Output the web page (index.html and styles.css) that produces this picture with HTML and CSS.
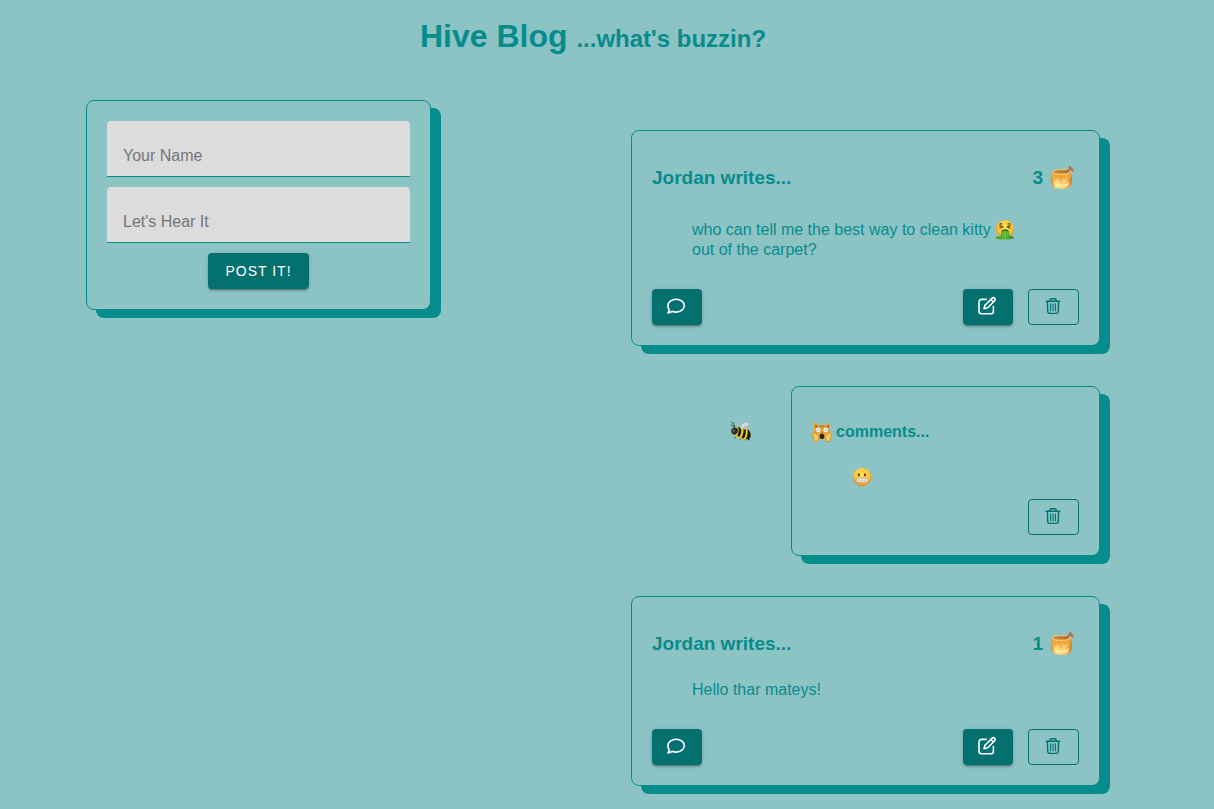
FILE: index.html
```html
<!DOCTYPE html>
<html lang="en">
<head>
<meta charset="utf-8">
<meta name="viewport" content="width=device-width, initial-scale=1">
<title>Hive Blog</title>
<link rel="stylesheet" href="styles.css">
</head>
<body>
<svg class="sprite" aria-hidden="true">
  <defs>
    <radialGradient id="face" cx=".5" cy=".4" r=".6"><stop offset="0" stop-color="#ffe45c"/><stop offset=".65" stop-color="#fbc63a"/><stop offset="1" stop-color="#e08a1c"/></radialGradient>
    <linearGradient id="honey-fill" x1="0" x2="1"><stop offset="0" stop-color="#d58a2a"/><stop offset=".25" stop-color="#ffd985"/><stop offset=".7" stop-color="#fbcb66"/><stop offset="1" stop-color="#c9781f"/></linearGradient>
    <linearGradient id="vomit" x1="0" x2="1"><stop offset="0" stop-color="#3f9a22"/><stop offset=".5" stop-color="#62b832"/><stop offset="1" stop-color="#2f861f"/></linearGradient>
  </defs>
  <symbol id="chat" viewBox="0 0 20 20"><path d="M10.200 3.200c4.600 0 8.100 2.800 8.100 6.400s-3.500 6.500-8.100 6.500c-1.600 0-3-.3-4.200-.9-.8.9-2.100 1.700-4.100 1.700.9-.8 1.300-1.900 1.200-3.100-.8-1.100-1.200-2.700-1.200-4.200 0-3.600 3.700-6.400 8.300-6.400z"/></symbol>
  <symbol id="edit" viewBox="0 0 20 20"><path d="M9.200 3.400H4.600a2.600 2.600 0 0 0-2.600 2.600v9.200a2.600 2.600 0 0 0 2.600 2.600h9.200a2.600 2.600 0 0 0 2.600-2.600v-4.600M7 12.800l1-3.600 7-7a1.750 1.750 0 0 1 2.600 2.500l-7 7zM13.800 3.400l2.600 2.600"/></symbol>
  <symbol id="trash" viewBox="0 0 20 20"><path d="M2.500 4.800h15M6.500 4.600V3.500a1.600 1.600 0 0 1 1.600-1.600h3.800a1.600 1.600 0 0 1 1.600 1.600v1.100M3.800 5l.3 11.200a2.100 2.100 0 0 0 2.100 2h7.600a2.100 2.100 0 0 0 2.100-2L16.200 5"/><path class="thin" d="M7.300 7.500v7.700M10 7.500v7.700M12.700 7.500v7.700"/></symbol>
  <symbol id="honey" viewBox="0 0 24 24">
    <path d="M3.200 6.500C.2 9.500 0 17 3 20.800c1.500 2.800 15.400 2.800 17 0 3-3.800 2.800-11.300-.2-14.300z" fill="url(#honey-fill)"/>
    <path d="M2.400 8.500c-.6 1-.9 2.600-.9 3.600 1.300.8 1.600-1.300 2.500-.8 1.100.7.300 3.300 1.400 3.300s.5-2.300 1.500-2.300.4 2.300 1.500 2.300.4-1.800 1.400-1.800.2 4 1.400 4 .3-5 1.500-5 .3 2.300 1.500 2.300.3-2.300 1.500-2.300.4 1.500 1.400 1.300c.8-.2.2-2 1.200-2.300 1.100-.3 1.800 1.500 2.700.8 0-1.300-.4-2.600-.9-3.300z" fill="#f0a63a"/>
    <path d="M4 14.500c.2 2.500.8 4.500 2 5.500 3 1 8 1 11 0 1.200-1 1.800-2.500 2-4.500-1.500 2.500-4 3.200-7.500 3.200s-6-1.200-7.500-4.200z" fill="#fff3b4" opacity=".8"/>
    <ellipse cx="11.500" cy="6" rx="9.700" ry="3" fill="#f3c46e"/><ellipse cx="11.500" cy="6" rx="8.300" ry="1.900" fill="#bf7f35"/>
    <path d="M4 6.400c3 1.700 12 1.700 15 0" stroke="#f0b04a" stroke-width=".8" fill="none"/>
    <path d="m15 6.300 6-3.800" stroke="#a86845" stroke-width="1.800" stroke-linecap="round"/><path d="m20 1.200 2.600 3.200" stroke="#b57452" stroke-width="2.400" stroke-linecap="round"/>
  </symbol>
  <symbol id="sick" viewBox="0 0 20 20">
    <circle cx="10" cy="9" r="9" fill="url(#face)"/>
    <path d="m4.200 5 3.500 1.900-3.300 1.400M15.800 5l-3.500 1.900 3.300 1.400M4.800 3.700l2.600.5m7.800-.5-2.600.5" fill="none" stroke="#764515" stroke-width="1.200"/>
    <path d="M6 12c.2-3.400 8-3.400 8 0v3c1.800.4 2.200 1.500 4.300 1.700 1.600.3.700 1.900-.8 2-2.500.7-4.500.7-7.500.7s-6 .2-8.200-.7c-2-.7-1.500-1.800.2-2 1.800-.3 3.800-.6 4-2z" fill="url(#vomit)"/>
    <path d="M6.200 11.500c.6-2.900 7-2.900 7.600 0-1.800-1-5.800-1-7.600 0z" fill="#42641c"/>
    <path d="M8 12.500v4m2.500-3.500v4.500m2-5v3" stroke="#86cc48" stroke-width=".6"/>
  </symbol>
  <symbol id="bee" viewBox="0 0 24 22">
    <path d="M5 6.500C4.700 3 3.500 1.600 1.500 1.600M4 7C3 4.700 2 4.200.6 4.500M9 15l-4 4m7-3-1 4.500m5-3 .5 3.500" fill="none" stroke="#3a3828" stroke-width="1"/>
    <path d="M5 8c3-2 9-2.100 13 .1 4 2.200 5 6.400 4 9.800l-1.800 2.400c-3.800 0-11-.5-15.200-5z" fill="#f6d51d"/>
    <path d="M8.500 7c1.700 1 1.200 6.500-.8 9l2.600 1.500c2.300-3.200 2.700-8.300 1.200-11zM14.300 6.800c1.200 3.500.2 8-1.900 11.700l2.800.7c2.200-3.500 2.700-7.800 1.700-11.400zM19 8.800c.7 4 0 7.700-1.800 11l2.700.4 1.200 1.300.4-2.500 1-1.600c.8-3.200-.5-6.400-3.500-8.600z" fill="#1e1d15"/>
    <path d="M2 8.500C4 6.500 8 7 8.600 9c.6 3-1 5.500-3.200 6C2 15.200.2 11 2 8.500z" fill="#302e22"/><circle cx="3.800" cy="10.600" r="1.200" fill="#77705a"/>
    <path d="M10.500 8C12 4.500 15.500 1 19 1.700c2.400.7 1 4.800-2 7z" fill="#d8ddd8" opacity=".9"/><path d="M13.500 8.500c2-2.800 5-4.600 7.300-3.800 1.700 1-.8 4-3.600 5.300z" fill="#b4bbb7" opacity=".9"/>
  </symbol>
  <symbol id="cat" viewBox="0 0 20 20">
    <path d="M1.800.7 7 3h6L18.200.7l-.1 8.300c.3 5-2.600 8.500-8.100 8.500S1.600 14 1.900 9z" fill="#eda82c"/><path d="m3 2.700 3 1.400-2.500 2zM17 2.700l-3 1.400 2.500 2z" fill="#a95d21"/>
    <path d="M10 3v3M8 3.200l.5 2M12 3.200l-.5 2" stroke="#a96820" stroke-width=".8"/>
    <ellipse cx="6.300" cy="8" rx="2.800" ry="2.700" fill="#f7f5ec" stroke="#ae6c28" stroke-width=".5"/><ellipse cx="13.700" cy="8" rx="2.800" ry="2.700" fill="#f7f5ec" stroke="#ae6c28" stroke-width=".5"/><circle cx="6.300" cy="8" r=".6" fill="#554433"/><circle cx="13.700" cy="8" r=".6" fill="#554433"/>
    <ellipse cx="10" cy="14.200" rx="2.300" ry="2.800" fill="#32221a"/><path d="M9 10.200h2l-1 1z" fill="#b44b39"/>
    <path d="M.5 11.500c.7-1.300 2-.5 2.500.5.600-1.200 1.700-.6 2 .5 1.700 0 2 1.500 1.500 3.500L6 19.500H2L1.500 16C.3 14.500 0 13 .5 11.500zm19 0c-.7-1.300-2-.5-2.500.5-.6-1.200-1.700-.6-2 .5-1.700 0-2 1.500-1.500 3.500l.5 3.500h4l.5-3.500c1.200-1.500 1.500-3 1-4.500z" fill="#f5c95a" stroke="#bd8127" stroke-width=".6"/>
  </symbol>
  <symbol id="grimace" viewBox="0 0 20 20">
    <circle cx="10" cy="10" r="9.200" fill="url(#face)"/><ellipse cx="7" cy="7.800" rx="1.100" ry="1.500" fill="#643810"/><ellipse cx="13" cy="7.800" rx="1.100" ry="1.500" fill="#643810"/>
    <rect x="4" y="11" width="12" height="4.600" rx="2.300" fill="#f4f1ea" stroke="#a58c69" stroke-width=".6"/><path d="M4.300 13.300h11.400M7 11v4.500m3-4.500v4.500m3-4.500v4.500" stroke="#b7b1a6" stroke-width=".5"/>
  </symbol>
</svg>

<header class="masthead">
  <h1 class="title">Hive Blog <small class="tagline">...what's buzzin?</small></h1>
</header>

<main class="layout">
  <form class="card composer">
    <input class="field" type="text" aria-label="Your Name" placeholder="Your Name">
    <input class="field" type="text" aria-label="Let's Hear It" placeholder="Let's Hear It">
    <button class="button submit" type="button">POST IT!</button>
  </form>

  <section class="feed" aria-label="Posts">
    <article class="card">
      <header class="card-head">
        <h2 class="author">Jordan writes...</h2>
        <span class="score">3 <svg class="jar" role="img" aria-label="honey"><use href="#honey"/></svg></span>
      </header>
      <p class="message">who can tell me the best way to clean kitty <svg class="emoji tall" role="img" aria-label="vomit"><use href="#sick"/></svg> out of the carpet?</p>
      <div class="actions">
        <button class="button tool first" type="button" aria-label="Comment"><svg class="icon"><use href="#chat"/></svg></button>
        <button class="button tool" type="button" aria-label="Edit"><svg class="icon"><use href="#edit"/></svg></button>
        <button class="button tool outlined" type="button" aria-label="Delete"><svg class="icon bin"><use href="#trash"/></svg></button>
      </div>
    </article>

    <div class="reply">
      <svg class="bee" role="img" aria-label="bee"><use href="#bee"/></svg>
      <article class="card comment">
        <h3 class="commenter"><svg class="emoji" role="img" aria-label="weary cat"><use href="#cat"/></svg> comments...</h3>
        <p class="message reaction"><svg class="emoji" role="img" aria-label="grimace"><use href="#grimace"/></svg></p>
        <div class="actions">
          <button class="button tool outlined" type="button" aria-label="Delete comment"><svg class="icon bin"><use href="#trash"/></svg></button>
        </div>
      </article>
    </div>

    <article class="card">
      <header class="card-head">
        <h2 class="author">Jordan writes...</h2>
        <span class="score">1 <svg class="jar" role="img" aria-label="honey"><use href="#honey"/></svg></span>
      </header>
      <p class="message">Hello thar mateys!</p>
      <div class="actions">
        <button class="button tool first" type="button" aria-label="Comment"><svg class="icon"><use href="#chat"/></svg></button>
        <button class="button tool" type="button" aria-label="Edit"><svg class="icon"><use href="#edit"/></svg></button>
        <button class="button tool outlined" type="button" aria-label="Delete"><svg class="icon bin"><use href="#trash"/></svg></button>
      </div>
    </article>
  </section>
</main>
</body>
</html>
```
FILE: styles.css
```css
:root {
  --page: #8cc3c5;
  --teal: #078c8c;
  --deep: #057070;
}

* {
  box-sizing: border-box;
}

body {
  margin: 0;
  background: var(--page);
  color: var(--teal);
  font: 16px/20px "Liberation Sans", Arial, sans-serif;
}

.sprite {
  position: absolute;
  width: 0;
  height: 0;
}

.masthead {
  padding: 16px 28px 44px 0;
  text-align: center;
}

.title {
  margin: 0;
  font-size: 32px;
  line-height: 40px;
}

.tagline {
  font-size: 24px;
  line-height: 24px;
}

.layout {
  display: flex;
  justify-content: space-between;
  align-items: flex-start;
  gap: 40px;
  padding: 0 114px 16px 86px;
}

.card {
  padding: 20px;
  border: 1px solid var(--teal);
  border-radius: 8px;
  background: var(--page);
  box-shadow: 10px 8px 0 var(--teal);
}

.composer {
  display: flex;
  flex-direction: column;
  flex: 0 1 345px;
  gap: 10px;
}

.field {
  width: 100%;
  height: 56px;
  padding: 20px 16px 6px;
  border: 0;
  border-bottom: 1px solid var(--teal);
  border-radius: 4px 4px 0 0;
  background: #dcdcdc;
  color: #333;
  font: inherit;
}

.field::placeholder {
  color: #757575;
  opacity: 1;
}

.button {
  display: flex;
  justify-content: center;
  align-items: center;
  width: 50px;
  height: 36px;
  padding: 0;
  border: 0;
  border-radius: 4px;
  background: var(--deep);
  box-shadow: 0 3px 1px -2px rgba(0, 0, 0, .2), 0 2px 2px rgba(0, 0, 0, .14), 0 1px 5px rgba(0, 0, 0, .12);
  color: #fff;
  font: inherit;
  cursor: pointer;
}

.submit {
  align-self: center;
  width: 101px;
  font-size: 14px;
  font-weight: 500;
  letter-spacing: 1px;
}

.tool {
  padding: 0 2px 2px 0;
}

.outlined {
  width: 51px;
  border: 1px solid var(--deep);
  background: transparent;
  box-shadow: none;
  color: var(--deep);
}

.icon {
  width: 20px;
  height: 20px;
  fill: none;
  stroke: currentColor;
  stroke-width: 1.6;
  stroke-linecap: round;
  stroke-linejoin: round;
}

.bin {
  width: 18px;
  height: 18px;
}

.thin {
  stroke-width: 1.2;
}

.feed {
  display: flex;
  flex-direction: column;
  flex: 0 1 469px;
  gap: 40px;
  margin-top: 30px;
}

.card-head {
  display: flex;
  justify-content: space-between;
  align-items: center;
  height: 24px;
  margin: 15px 5px 24px 0;
}

.author,
.score {
  margin: 0;
  font-size: 19px;
  font-weight: 700;
}

.score {
  display: flex;
  align-items: center;
  gap: 7px;
}

.jar {
  width: 24px;
  height: 24px;
}

.message {
  margin: 0 40px 29px;
}

.emoji {
  width: 20px;
  height: 20px;
  vertical-align: -5px;
}

.tall {
  height: 26px;
  padding-top: 6px;
}

.actions {
  display: flex;
  justify-content: flex-end;
  gap: 15px;
}

.first {
  margin-right: auto;
}

.reply {
  display: flex;
  justify-content: flex-end;
  align-items: flex-start;
  gap: 39px;
}

.bee {
  width: 22px;
  height: 22px;
  margin-top: 34px;
}

.comment {
  flex: 0 1 309px;
}

.commenter {
  display: flex;
  align-items: center;
  gap: 4px;
  margin: 15px 0 25px;
  font-size: 16px;
}

.reaction {
  height: 20px;
  margin-bottom: 12px;
}
```
